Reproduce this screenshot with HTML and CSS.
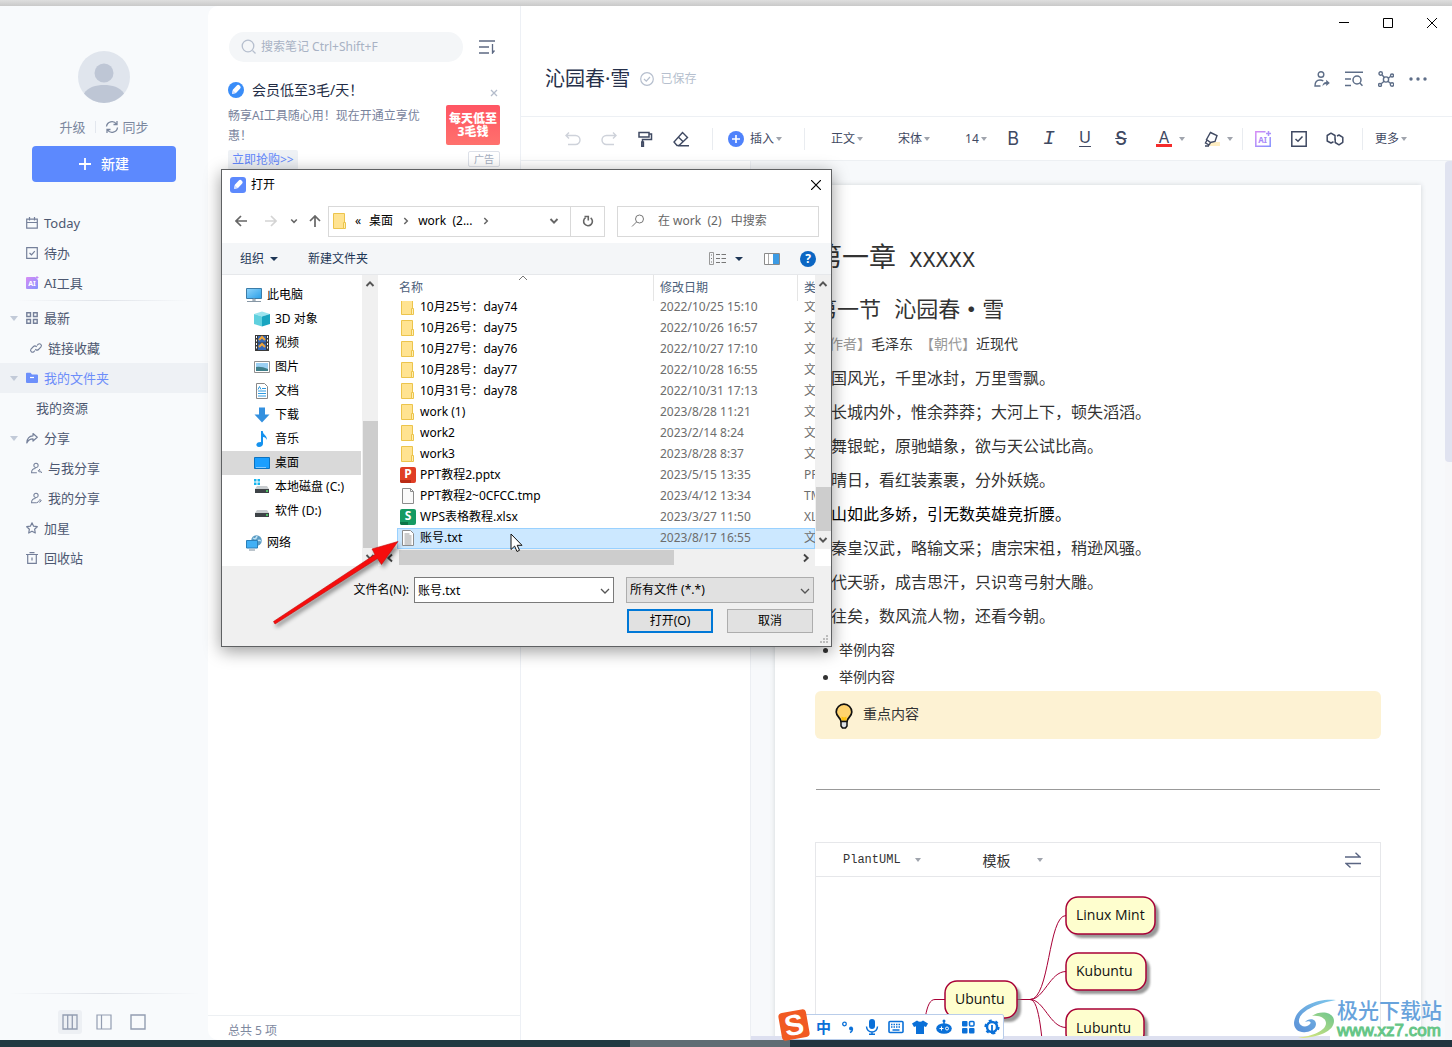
FILE: index.html
```html
<!DOCTYPE html>
<html lang="zh-CN">
<head>
<meta charset="utf-8">
<title>沁园春·雪</title>
<link rel="stylesheet" href="styles.css">
</head>
<body>
<svg class="defs" aria-hidden="true">
  <defs>
    <linearGradient id="ai-grad" x1="0" y1="0" x2="1" y2="1"><stop offset="0" stop-color="#d98cf5"/><stop offset="1" stop-color="#8292ff"/></linearGradient>
    <linearGradient id="screen" x1="0" y1="0" x2="1" y2="1"><stop offset="0" stop-color="#8fd4fb"/><stop offset="1" stop-color="#2a9fe8"/></linearGradient>
    <linearGradient id="swirl-blue" x1="0" y1="1" x2="1" y2="0"><stop offset="0" stop-color="#5a8fd6"/><stop offset="1" stop-color="#7fc8ec"/></linearGradient>
    <linearGradient id="swirl-green" x1="0" y1="1" x2="1" y2="0"><stop offset="0" stop-color="#e4ea7c"/><stop offset="1" stop-color="#6cc58f"/></linearGradient>
    <symbol id="folder" viewBox="0 0 16 16"><path d="M1.500.5h11v15h-11z" fill="#ffe391" stroke="#ecc44c"/><path d="M11.500 9.500h2v6h-2z" fill="#fff0b5" stroke="#ecc44c"/></symbol>
    <symbol id="person" viewBox="0 0 14 14"><circle cx="7" cy="4" r="2.500" fill="none" stroke="currentColor" stroke-width="1.200"/><path d="M8 12.500H1.800c0-3 2-5 4.700-5" fill="none" stroke="currentColor" stroke-width="1.200"/></symbol>
    <symbol id="chev-down" viewBox="0 0 10 10"><path d="M1 3l4 4 4-4" fill="none" stroke="currentColor" stroke-width="1.300"/></symbol>
    <symbol id="chev-up" viewBox="0 0 10 10"><path d="M1.500 7L5 3.300 8.500 7" fill="none" stroke="currentColor" stroke-width="1.900"/></symbol>
    <symbol id="chev-low" viewBox="0 0 10 10"><path d="M1.500 3L5 6.700 8.500 3" fill="none" stroke="currentColor" stroke-width="1.900"/></symbol>
    <symbol id="chev-right" viewBox="0 0 10 10"><path d="M3.300 2l3 3-3 3" fill="none" stroke="currentColor" stroke-width="1.500"/></symbol>
    <symbol id="pen" viewBox="0 0 16 16"><path d="M4 12l.8-4.200 4-4.300c1-1 2-.8 3 .2s1.200 2 .2 3L8 11z" fill="#fff"/><path d="M4 12l.8-3.500L8 11z" fill="#cfdcff"/></symbol>
    <symbol id="drive" viewBox="0 0 16 16"><path d="M3 7h10l2 3H1z" fill="#c9cdd0"/><path d="M1 10h14v4H1z" fill="#3e4347"/><path d="M12 12h2" stroke="#55e36b" stroke-width="1.400"/></symbol>
  </defs>
</svg>

<div class="desktop">
  <div class="backdrop"></div>
  <div class="app">
    <nav class="sidebar">
      <div class="avatar"><svg viewBox="0 0 52 52" width="52" height="52"><circle cx="26" cy="26" r="26" fill="#e0e5ed"/><circle cx="26" cy="22" r="9.500" fill="#bec6d5"/><path d="M6 42.500C10 36 18 34 26 34s16 2 20 8.500A26 26 0 0 1 6 42.500z" fill="#bec6d5"/></svg></div>
      <div class="account">
        <a href="#">升级</a><i class="bar"></i>
        <a href="#" class="sync"><svg viewBox="0 0 14 14" width="14" height="14"><path d="M1.500 6.500A5.500 5.500 0 0 1 11.500 4M12.500 7.500A5.500 5.500 0 0 1 2.500 10M12 1v3.500H8.500M2 13V9.500h3.500" fill="none" stroke="currentColor" stroke-width="1.300"/></svg>同步</a>
      </div>
      <button class="new"><svg viewBox="0 0 12 12" width="12" height="12"><path d="M6 0v12M0 6h12" stroke="#fff" stroke-width="1.800"/></svg>新建</button>
      <ul class="menu">
        <li><a href="#"><svg viewBox="0 0 12 12" width="12" height="12"><path d="M.7 2.200h10.600v9H.7zM.7 5.500h10.600M3.500 0v3.500M8.500 0v3.500" fill="none" stroke="currentColor" stroke-width="1.200"/></svg>Today</a></li>
        <li><a href="#"><svg viewBox="0 0 12 12" width="12" height="12"><path d="M.7.7h10.600v10.600H.7zM3.500 6l2 1.800 3.300-3.600" fill="none" stroke="currentColor" stroke-width="1.200"/></svg>待办</a></li>
        <li><a href="#"><svg viewBox="0 0 12 12" width="12" height="12"><path d="M1 0h8l3 3v8q0 1-1 1H1q-1 0-1-1V1q0-1 1-1z" fill="url(#ai-grad)"/><path d="M11 -1v3M9.500 .5h3" stroke="#c38af7"/><text x="6" y="9" font-size="7" font-weight="bold" text-anchor="middle" fill="#fff">AI</text></svg>AI工具</a></li>
      </ul>
      <hr class="fade">
      <ul class="menu tree-menu">
        <li><a href="#"><i class="tri"></i><svg viewBox="0 0 12 12" width="12" height="12"><path d="M.8.8h3.700v3.700H.8zM7.500.8h3.700v3.700H7.500zM.8 7.500h3.700v3.700H.8zM7.500 7.500h3.700v3.700H7.500z" fill="none" stroke="currentColor" stroke-width="1.400"/></svg>最新</a></li>
        <li class="sub"><a href="#"><svg viewBox="0 0 12 12" width="12" height="12"><path d="M5 8.500L3.800 9.800a2 2 0 0 1-2.800-2.800l2.500-2.500a2 2 0 0 1 2.800 0l.4.5M7 3.500L8.200 2.200A2 2 0 0 1 11 5L8.500 7.500a2 2 0 0 1-2.800 0L5.300 7" fill="none" stroke="currentColor" stroke-width="1.100"/></svg>链接收藏</a></li>
        <li class="on"><a href="#"><i class="tri"></i><svg viewBox="0 0 12 12" width="12" height="12"><path d="M0 1.500Q0 .8 1 .8h3.500L6 2.500h5q1 0 1 1V10q0 1-1 1H1q-1 0-1-1z" fill="#6d90fb"/><path d="M4 5.500h4" stroke="#fff" stroke-width="1.200"/></svg>我的文件夹</a></li>
        <li class="leaf"><a href="#">我的资源</a></li>
        <li><a href="#"><i class="tri"></i><svg viewBox="0 0 12 12" width="12" height="12"><path d="M7 1.500L11.300 5.300 7 9V6.800C4 6.800 2 8 .8 11 1 6.500 3.500 4 7 3.800z" fill="none" stroke="currentColor" stroke-width="1.200" stroke-linejoin="round"/></svg>分享</a></li>
        <li class="sub"><a href="#"><svg viewBox="0 0 12 12" width="12" height="12"><use href="#person"/><path d="M11.500 11c0-1.500-1-2.200-3-2.200M10 7L8.300 8.800 10 10.500" fill="none" stroke="currentColor"/></svg>与我分享</a></li>
        <li class="sub"><a href="#"><svg viewBox="0 0 12 12" width="12" height="12"><use href="#person"/><path d="M7.500 11c0-1.500 1-2.200 3-2.200M9.500 7l1.800 1.800-1.800 1.700" fill="none" stroke="currentColor"/></svg>我的分享</a></li>
        <li><a href="#"><svg viewBox="0 0 12 12" width="12" height="12"><path d="M6 .8l1.600 3.400 3.700.5-2.700 2.500.7 3.800L6 9.200 2.700 11l.7-3.800L.7 4.700l3.700-.5z" fill="none" stroke="currentColor" stroke-width="1.200" stroke-linejoin="round"/></svg>加星</a></li>
        <li><a href="#"><svg viewBox="0 0 12 12" width="12" height="12"><path d="M0 2.500h12M3.500.6h5M1.700 2.500v8.800h8.600V2.500M6 5.500v3" fill="none" stroke="currentColor" stroke-width="1.200"/></svg>回收站</a></li>
      </ul>
      <div class="views">
        <hr class="fade">
        <div class="view-buttons">
          <button class="on" aria-label="三栏"><svg viewBox="0 0 16 16" width="16" height="16"><path d="M1 1h14v14H1zM5.700 1v14M10.300 1v14" fill="none" stroke="currentColor" stroke-width="1.300"/></svg></button>
          <button aria-label="两栏"><svg viewBox="0 0 16 16" width="16" height="16"><path d="M1 1h14v14H1zM5.500 1v14" fill="none" stroke="currentColor" stroke-width="1.200"/></svg></button>
          <button aria-label="单栏"><svg viewBox="0 0 16 16" width="16" height="16"><path d="M1 1h14v14H1z" fill="none" stroke="currentColor" stroke-width="1.400"/></svg></button>
        </div>
      </div>
    </nav>

    <section class="notes">
      <div class="search-row">
        <label class="search"><svg viewBox="0 0 16 16" width="16" height="16"><circle cx="7" cy="7" r="5.800" fill="none" stroke="#b6bfce" stroke-width="1.300"/><path d="M11.500 11.500l3 3" stroke="#b6bfce" stroke-width="1.300"/></svg><input type="text" aria-label="搜索笔记" placeholder="搜索笔记 Ctrl+Shift+F"></label>
        <button class="plain sort" aria-label="排序"><svg viewBox="0 0 16 14" width="16" height="14"><path d="M0 1h16M0 7h10M0 13h10M13.500 4v9l2-2.500" fill="none" stroke="#5d6983" stroke-width="1.300"/></svg></button>
      </div>
      <article class="ad">
        <header><svg viewBox="0 0 16 16" width="16" height="16"><circle cx="8" cy="8" r="8" fill="#3a8df8"/><use href="#pen"/></svg><h2>会员低至3毛/天！</h2><button class="plain" aria-label="关闭"><svg viewBox="0 0 8 8" width="8" height="8"><path d="M1 1l6 6M7 1L1 7" stroke="#b4bccb" stroke-width="1.300"/></svg></button></header>
        <div class="ad-body">
          <div class="ad-text"><p>畅享AI工具随心用！现在开通立享优惠！</p><a href="#">立即抢购&gt;&gt;</a></div>
          <div class="ad-side"><strong>每天低至<br>3毛钱</strong><small>广告</small></div>
        </div>
      </article>
      <footer>总共 5 项</footer>
    </section>

    <main class="editor">
      <header class="head">
        <div class="win">
          <button class="plain" aria-label="最小化"><svg viewBox="0 0 10 10" width="10" height="10"><path d="M0 4.500h10" stroke="#000"/></svg></button>
          <button class="plain" aria-label="最大化"><svg viewBox="0 0 10 10" width="10" height="10"><path d="M.5.5h9v9h-9z" fill="none" stroke="#000"/></svg></button>
          <button class="plain" aria-label="关闭窗口"><svg viewBox="0 0 10 10" width="10" height="10"><path d="M0 0l10 10M10 0L0 10" stroke="#000"/></svg></button>
        </div>
        <div class="title-row">
          <h1>沁园春·雪</h1>
          <span class="saved"><svg viewBox="0 0 14 14" width="14" height="14"><circle cx="7" cy="7" r="6.300" fill="none" stroke="currentColor" stroke-width="1.200"/><path d="M4 7l2.300 2.200L10 5" fill="none" stroke="currentColor" stroke-width="1.200"/></svg>已保存</span>
          <div class="actions">
            <button class="plain" aria-label="分享"><svg viewBox="0 0 16 16" width="16" height="16"><circle cx="7" cy="3.500" r="2.800" fill="none" stroke="currentColor" stroke-width="1.400"/><path d="M6.500 15H1c0-4 2-6 5-6 1.500 0 2.500.4 3.300 1" fill="none" stroke="currentColor" stroke-width="1.400"/><path d="M8.500 15.500c0-3 1.500-4.500 3.700-4.500V8.800l3.600 3.200-3.600 3v-2c-1.500 0-2.700.7-3.700 2.500z" fill="currentColor"/></svg></button>
            <button class="plain" aria-label="查找"><svg viewBox="0 0 18 16" width="18" height="16"><path d="M0 1.200h18M0 8h6M0 14.500h6" stroke="currentColor" stroke-width="1.500"/><circle cx="12" cy="9" r="4" fill="none" stroke="currentColor" stroke-width="1.500"/><path d="M14.800 12l2.700 2.800" stroke="currentColor" stroke-width="1.500"/></svg></button>
            <button class="plain" aria-label="关系图"><svg viewBox="0 0 16 16" width="16" height="16"><g fill="none" stroke="currentColor" stroke-width="1.400"><circle cx="8" cy="8.500" r="2.600"/><circle cx="2.700" cy="2.500" r="1.700"/><circle cx="14" cy="4.500" r="1.500"/><circle cx="2" cy="14" r="1.500"/><circle cx="14" cy="13.500" r="1.700"/><path d="M4 3.800L6.300 6.500M12.700 5.200l-2.400 2M3.200 12.800l2.900-2.500M12.600 12.600l-2.600-2.300"/></g></svg></button>
            <button class="plain" aria-label="更多操作"><svg viewBox="0 0 18 4" width="18" height="4"><g fill="currentColor"><circle cx="2" cy="2" r="1.700"/><circle cx="9" cy="2" r="1.700"/><circle cx="16" cy="2" r="1.700"/></g></svg></button>
          </div>
        </div>
      </header>

      <div class="toolbar">
        <div class="tools">
          <button class="tool off" aria-label="撤销"><svg viewBox="0 0 16 14" width="16" height="14"><path d="M1 3.500h9.500a4.500 4.500 0 0 1 0 9H3M4 .5l-3 3 3 3" fill="none" stroke="currentColor" stroke-width="1.400"/></svg></button>
          <button class="tool off" aria-label="重做"><svg viewBox="0 0 16 14" width="16" height="14"><path d="M15 3.500H5.500a4.500 4.500 0 0 0 0 9H13M12 .5l3 3-3 3" fill="none" stroke="currentColor" stroke-width="1.400"/></svg></button>
          <button class="tool" aria-label="格式刷"><svg viewBox="0 0 16 16" width="16" height="16"><path d="M2 1.500h10v4.500H2zM12 3h2.500v5.500h-9V11M4.800 11h1.600v4.500H4.800z" fill="none" stroke="currentColor" stroke-width="1.500"/></svg></button>
          <button class="tool" aria-label="清除格式"><svg viewBox="0 0 16 16" width="16" height="16"><path d="M9.500 1.500l5 5-8.500 8H4L1 11zM5.300 6l5.200 5M5 14.700h11" fill="none" stroke="currentColor" stroke-width="1.400"/></svg></button>
        </div>
        <i class="sep"></i>
        <button class="pick insert"><svg viewBox="0 0 16 16" width="16" height="16"><circle cx="8" cy="8" r="8" fill="#4f82fb"/><path d="M8 4v8M4 8h8" stroke="#fff" stroke-width="1.600"/></svg>插入<i class="caret"></i></button>
        <i class="sep"></i>
        <div class="picks">
          <button class="pick">正文<i class="caret"></i></button>
          <button class="pick">宋体<i class="caret"></i></button>
          <button class="pick size">14<i class="caret"></i></button>
        </div>
        <div class="tools">
          <button class="tool glyph">B</button>
          <button class="tool glyph it">I</button>
          <button class="tool glyph un">U</button>
          <button class="tool glyph st">S</button>
        </div>
        <div class="swatches">
          <button class="pick swatch"><span class="colour">A</span><i class="caret"></i></button>
          <button class="pick swatch" aria-label="高亮"><svg viewBox="0 0 16 16" width="16" height="16"><path d="M5 11h11v4H5z" fill="#ffeec2"/><path d="M6.500 1.500l6.500 3-2 6-4.500 1-4-3zM3 9l-1.500 3 3.500 1.800 1.500-2M1 15h4" fill="none" stroke="currentColor" stroke-width="1.400"/></svg><i class="caret"></i></button>
        </div>
        <i class="sep tight"></i>
        <div class="tools">
          <button class="tool" aria-label="AI"><svg viewBox="0 0 16 16" width="16" height="16"><path d="M10.500.8H.8v14.400h14.400V6M13.500 0v5M11 2.500h5" fill="none" stroke="url(#ai-grad)" stroke-width="1.500"/><text x="7.500" y="11.500" font-size="8" font-weight="bold" text-anchor="middle" fill="#a98af8">AI</text></svg></button>
          <button class="tool" aria-label="待办"><svg viewBox="0 0 16 16" width="16" height="16"><path d="M.8.8h14.400v14.400H.8zM4.500 8l2.500 2.300L11.500 5.500" fill="none" stroke="currentColor" stroke-width="1.500"/></svg></button>
          <button class="tool" aria-label="链接"><svg viewBox="0 0 18 14" width="18" height="14"><path d="M7.500 9.800L5 11 1.200 9V3.500L5 1.200l4 2.300V8M11 4l2-1 3.800 2.300v5L13 12.800 9.200 10.500V6.500" fill="none" stroke="currentColor" stroke-width="1.500" stroke-linejoin="round"/></svg></button>
        </div>
        <i class="sep tight"></i>
        <button class="pick more">更多<i class="caret"></i></button>
      </div>

      <div class="work">
        <aside class="outline"></aside>
        <div class="canvas">
          <article class="paper">
            <h2>第一章<span class="half"> XXXXX</span></h2>
            <h3>第一节<span class="half"> </span>沁园春<span class="dot">·</span>雪</h3>
            <p class="by"><span>【作者】</span>毛泽东　<span>【朝代】</span>近现代</p>
            <div class="poem">
              <p>北国风光，千里冰封，万里雪飘。</p>
              <p>望长城内外，惟余莽莽；大河上下，顿失滔滔。</p>
              <p>山舞银蛇，原驰蜡象，欲与天公试比高。</p>
              <p>须晴日，看红装素裹，分外妖娆。</p>
              <p class="strong">江山如此多娇，引无数英雄竞折腰。</p>
              <p>惜秦皇汉武，略输文采；唐宗宋祖，稍逊风骚。</p>
              <p>一代天骄，成吉思汗，只识弯弓射大雕。</p>
              <p>俱往矣，数风流人物，还看今朝。</p>
            </div>
            <ul class="points"><li>举例内容</li><li>举例内容</li></ul>
            <div class="callout"><svg viewBox="0 0 18 26" width="18" height="26"><path d="M6 18.500C6 15 1.200 13.500 1.200 9a7.800 7.800 0 0 1 15.600 0c0 4.500-4.800 6-4.800 9.500z" fill="#ffd36e" stroke="#111" stroke-width="1.700"/><path d="M6.500 13.500l2.500 1 2.500-1v4h-5z" fill="#ffc20e"/><path d="M6 18.500h6v4.500l-1.500 2h-3L6 23z" fill="#dfe3e8" stroke="#111" stroke-width="1.500"/></svg><span>重点内容</span></div>
            <hr>
            <div class="uml">
              <div class="uml-bar"><button class="plain">PlantUML<i class="caret"></i></button><button class="plain tpl">模板<i class="caret"></i></button><button class="plain swap" aria-label="切换"><svg viewBox="0 0 16 16" width="16" height="16"><path d="M0 5h15L10.500.8M16 11.500H1l4.500 4" fill="none" stroke="#5b6683" stroke-width="1.400"/></svg></button></div>
              <svg class="diagram" width="564" height="220" viewBox="0 0 564 220">
                <g fill="none" stroke="#a80036"><path d="M201 122.500h13c20 0 18-84 36-84M214 122.500c14 0 20-28 36-28M214 122.500c14 0 20 28 36 28M214 122.500c10 0 12 40 16 84M129 122.500h-10c-10 0-10 24-16 60"/></g>
                <g class="shadow"><rect x="254" y="24" width="89" height="37" rx="12"/><rect x="254" y="80" width="80" height="37" rx="12"/><rect x="254" y="136" width="78" height="37" rx="12"/><rect x="133" y="108" width="72" height="37" rx="12"/></g>
                <g fill="#fefece" stroke="#a80036" stroke-width="1.500"><rect x="250" y="20" width="89" height="37" rx="12"/><rect x="250" y="76" width="80" height="37" rx="12"/><rect x="250" y="132" width="78" height="37" rx="12"/><rect x="129" y="104" width="72" height="37" rx="12"/></g>
                <g class="labels"><text x="260" y="43">Linux Mint</text><text x="260" y="99">Kubuntu</text><text x="260" y="156">Lubuntu</text><text x="139" y="127">Ubuntu</text></g>
              </svg>
            </div>
          </article>
          <i class="track"><i></i></i>
          <i class="hbar"></i>
        </div>
      </div>
    </main>
  </div>
  <div class="taskbar"></div>
</div>

<section class="dialog" role="dialog" aria-label="打开">
  <header class="dlg-title"><svg viewBox="0 0 16 16" width="16" height="16"><rect width="16" height="16" rx="3" fill="#5c89fd"/><use href="#pen"/></svg><span>打开</span><button class="plain" aria-label="关闭"><svg viewBox="0 0 10 10" width="10" height="10"><path d="M0 0l10 10M10 0L0 10" stroke="#000" stroke-width="1.200"/></svg></button></header>
  <div class="dlg-nav">
    <button class="plain back" aria-label="后退"><svg viewBox="0 0 12 12" width="12" height="12"><path d="M12 6H1.500M6 1L1 6l5 5" fill="none" stroke="#666" stroke-width="1.700"/></svg></button>
    <button class="plain fwd" aria-label="前进"><svg viewBox="0 0 12 12" width="12" height="12"><path d="M0 6h10.500M6 1l5 5-5 5" fill="none" stroke="#d4d4d4" stroke-width="1.700"/></svg></button>
    <button class="plain" aria-label="最近"><svg width="8" height="8"><use href="#chev-low"/></svg></button>
    <button class="plain up" aria-label="上移"><svg viewBox="0 0 12 12" width="12" height="12"><path d="M6 12V1.500M1 6l5-5 5 5" fill="none" stroke="#666" stroke-width="1.700"/></svg></button>
    <div class="address">
      <svg width="16" height="16"><use href="#folder"/></svg><span class="lead">«</span><span>桌面</span><svg width="10" height="10"><use href="#chev-right"/></svg><span>work&nbsp; (2...</span><svg width="10" height="10"><use href="#chev-right"/></svg>
      <button class="plain drop" aria-label="历史"><svg width="10" height="10"><use href="#chev-low"/></svg></button>
      <button class="plain refresh" aria-label="刷新"><svg viewBox="0 0 12 12" width="12" height="12"><path d="M8.700 2.800A4.400 4.400 0 1 1 3.600 2.600M2.500 1.500h3.800v4" fill="none" stroke="#666" stroke-width="1.600"/></svg></button>
    </div>
    <label class="find"><svg viewBox="0 0 14 14" width="14" height="14"><circle cx="8.500" cy="5" r="4" fill="none" stroke="#777"/><path d="M5.500 8L1 12.500" stroke="#777"/></svg><input type="text" aria-label="搜索" placeholder="在 work&nbsp; (2)&nbsp;&nbsp; 中搜索"></label>
  </div>
  <div class="dlg-tools">
    <button class="plain">组织<i class="caret dark"></i></button><button class="plain">新建文件夹</button>
    <div class="dlg-right">
      <button class="plain" aria-label="视图"><svg viewBox="0 0 17 13" width="17" height="13"><path d="M.5.5h4v12h-4z" fill="none" stroke="#999"/><path d="M2 3h1M2 6.500h1M2 10h1M7 2.500h4M12.500 2.500H17M7 6.500h4M12.500 6.500H17M7 10.500h4M12.500 10.500H17" stroke="#777"/></svg><i class="caret dark"></i></button>
      <button class="plain" aria-label="预览窗格"><svg viewBox="0 0 16 12" width="16" height="12"><path d="M.5.5h15v11H.5z" fill="#fff" stroke="#8a8a8a"/><path d="M9 1h6v10H9z" fill="#3c9be4"/><path d="M4.500 1v10" stroke="#aaa"/></svg></button>
      <button class="plain help" aria-label="帮助">?</button>
    </div>
  </div>
  <div class="dlg-body">
    <ul class="places">
      <li class="root"><svg viewBox="0 0 16 16" width="16" height="16"><path d="M.5 1.500h15v10H.5z" fill="url(#screen)" stroke="#3b7ca8"/><path d="M7 12h2v2H7zM1 14.500h14" stroke="#8797a5" fill="none"/></svg>此电脑</li>
      <li><svg viewBox="0 0 16 16" width="16" height="16"><path d="M0 3l8-2.500L16 3l-8 2.500z" fill="#9be4ee"/><path d="M0 3l8 2.500v10L0 13z" fill="#5fd0de"/><path d="M16 3L8 5.500v10l8-2.500z" fill="#18a5c0"/></svg>3D 对象</li>
      <li><svg viewBox="0 0 16 16" width="16" height="16"><path d="M1 0h14v16H1z" fill="#3a3a3a"/><path d="M4 1h8v6.500H4zM4 8.500h8V15H4z" fill="#3468b8"/><path d="M5 5l3-3 3 3M5 12l3-3 3 3" stroke="#f0a53a" stroke-width="2" fill="none"/><path d="M2.500 1v14M13.500 1v14" stroke="#fff" stroke-dasharray="2 1.500"/></svg>视频</li>
      <li><svg viewBox="0 0 16 16" width="16" height="16"><path d="M.5 2.500h15v11H.5z" fill="#fff" stroke="#8f8f8f"/><path d="M2 4h12v8H2z" fill="#9bd0f3"/><path d="M2 8q5-1 12 2v2H2z" fill="#3f7f8a"/></svg>图片</li>
      <li><svg viewBox="0 0 16 16" width="16" height="16"><path d="M2.500.5h8l3 3v12h-11z" fill="#fff" stroke="#888"/><path d="M4 8h8M4 10.500h8M4 13h8M8 5.500h4" stroke="#2f9ae0"/><path d="M4 6.500l1.500-3L7 6.500" stroke="#2f9ae0" fill="none"/></svg>文档</li>
      <li><svg viewBox="0 0 16 16" width="16" height="16"><path d="M5 .5h6v7h4.500L8 15.500.5 7.500H5z" fill="#3390df"/></svg>下载</li>
      <li><svg viewBox="0 0 16 16" width="16" height="16"><path d="M7 0h1.800c0 4 4.500 4 4 9-.7-2-2-2.800-3.800-3v6.500c0 2-1.500 3.500-4 3.500-3.500 0-3.500-4.500 0-4.800L7 11z" fill="#1592ee"/></svg>音乐</li>
      <li class="on"><svg viewBox="0 0 16 16" width="16" height="16"><path d="M.5 2.500h15v11H.5z" fill="#1a9fff" stroke="#0c72bf"/><path d="M2 12.500h10" stroke="#9fd6ff" stroke-width=".8"/></svg>桌面</li>
      <li><svg viewBox="0 0 16 16" width="16" height="16"><use href="#drive"/><path d="M0 0h2.500v2.500H0zM3.500 0H6v2.500H3.500zM0 3.500h2.500V6H0zM3.500 3.500H6V6H3.500z" fill="#16b5ee"/></svg>本地磁盘 (C:)</li>
      <li><svg width="16" height="16"><use href="#drive"/></svg>软件 (D:)</li>
      <li class="root net"><svg viewBox="0 0 16 16" width="16" height="16"><circle cx="10.500" cy="5.500" r="5.300" fill="#5b9cc4"/><path d="M7 3q3 2 4-2M9 8q3-4 6-2" stroke="#bfe2f5" stroke-width="1.500" fill="none"/><path d="M.5 5.500h11v7.500H.5z" fill="#41b0f5" stroke="#2a7fb8"/><path d="M3 15h6" stroke="#7a8c99"/></svg>网络</li>
    </ul>
    <div class="vscroll tree-scroll"><svg width="10" height="10"><use href="#chev-up"/></svg><i></i><svg width="10" height="10"><use href="#chev-low"/></svg></div>
    <div class="files">
      <div class="files-main">
        <div class="files-view">
          <table>
            <colgroup><col class="c-name"><col class="c-date"><col></colgroup>
            <thead><tr><th><div>名称<svg class="sorted" width="10" height="10"><path d="M1 7l4-4 4 4" fill="none" stroke="#777"/></svg></div></th><th><div>修改日期</div></th><th><div>类型</div></th></tr></thead>
            <tbody>
              <tr><td><svg width="16" height="16"><use href="#folder"/></svg>10月25号：day74</td><td>2022/10/25 15:10</td><td>文件夹</td></tr>
              <tr><td><svg width="16" height="16"><use href="#folder"/></svg>10月26号：day75</td><td>2022/10/26 16:57</td><td>文件夹</td></tr>
              <tr><td><svg width="16" height="16"><use href="#folder"/></svg>10月27号：day76</td><td>2022/10/27 17:10</td><td>文件夹</td></tr>
              <tr><td><svg width="16" height="16"><use href="#folder"/></svg>10月28号：day77</td><td>2022/10/28 16:55</td><td>文件夹</td></tr>
              <tr><td><svg width="16" height="16"><use href="#folder"/></svg>10月31号：day78</td><td>2022/10/31 17:13</td><td>文件夹</td></tr>
              <tr><td><svg width="16" height="16"><use href="#folder"/></svg>work (1)</td><td>2023/8/28 11:21</td><td>文件夹</td></tr>
              <tr><td><svg width="16" height="16"><use href="#folder"/></svg>work2</td><td>2023/2/14 8:24</td><td>文件夹</td></tr>
              <tr><td><svg width="16" height="16"><use href="#folder"/></svg>work3</td><td>2023/8/28 8:37</td><td>文件夹</td></tr>
              <tr><td><svg viewBox="0 0 16 16" width="16" height="16"><rect width="16" height="16" rx="2" fill="#e03e25"/><path d="M0 13h11v3H2q-2 0-2-2z" fill="#b92a14"/><text x="8" y="11" font-size="12" font-weight="bold" text-anchor="middle" fill="#fff">P</text></svg>PPT教程2.pptx</td><td>2023/5/15 13:35</td><td>PPTX</td></tr>
              <tr><td><svg viewBox="0 0 16 16" width="16" height="16"><path d="M2.500.5h8l3 3v12h-11z" fill="#fafafa" stroke="#8c8c8c"/><path d="M10.500.5v3h3" fill="none" stroke="#8c8c8c"/></svg>PPT教程2~0CFCC.tmp</td><td>2023/4/12 13:34</td><td>TMP</td></tr>
              <tr><td><svg viewBox="0 0 16 16" width="16" height="16"><rect width="16" height="16" rx="2" fill="#159a62"/><path d="M0 13h8v3H2q-2 0-2-2z" fill="#0a7447"/><text x="8" y="11" font-size="12" font-weight="bold" text-anchor="middle" fill="#fff">S</text></svg>WPS表格教程.xlsx</td><td>2023/3/27 11:50</td><td>XLSX</td></tr>
              <tr class="on"><td><svg viewBox="0 0 16 16" width="16" height="16"><path d="M2.500.5h8l3 3v12h-11z" fill="#fff" stroke="#8c8c8c"/><path d="M4.500 4h5M4.500 6h7M4.500 8h7M4.500 10h7M4.500 12h7M4.500 14h7" stroke="#999"/></svg>账号.txt</td><td>2023/8/17 16:55</td><td>文本</td></tr>
            </tbody>
          </table>
        </div>
        <div class="vscroll list-scroll"><svg width="10" height="10"><use href="#chev-up"/></svg><i></i><svg width="10" height="10"><use href="#chev-low"/></svg></div>
      </div>
      <div class="hscroll"><svg viewBox="0 0 10 10" width="10" height="10"><path d="M7 1.500L3.300 5 7 8.500" fill="none" stroke="currentColor" stroke-width="1.900"/></svg><i></i><svg viewBox="0 0 10 10" width="10" height="10"><path d="M3 1.500L6.700 5 3 8.500" fill="none" stroke="currentColor" stroke-width="1.900"/></svg></div>
    </div>
  </div>
  <footer class="dlg-foot">
    <div class="foot-row"><label for="fname">文件名(N):</label><span class="combo"><input id="fname" type="text" value="账号.txt"><svg width="10" height="10"><use href="#chev-down"/></svg></span><span class="combo grey"><select aria-label="文件类型"><option>所有文件 (*.*)</option></select><svg width="10" height="10"><use href="#chev-down"/></svg></span></div>
    <div class="foot-row"><button class="btn primary">打开(O)</button><button class="btn">取消</button></div>
    <svg class="grip" viewBox="0 0 9 9" width="9" height="9"><path d="M6 1h2M3 4h2M6 4h2M0 7h2M3 7h2M6 7h2" stroke="#bcbcbc" stroke-width="2"/></svg>
  </footer>
</section>

<svg class="pointer-arrow" viewBox="0 0 136 96" width="136" height="96"><path d="M4.500 85.500L106 18.500 103 13 129 5.500 112.500 28.500 108.500 22.500 6 88z" fill="#f60d0d" stroke="#c40a0a" stroke-width=".6"/></svg>
<svg class="cursor" viewBox="0 0 13 20" width="13" height="20"><path d="M1 1v15.500l3.600-3.400L7 18.500l2.500-1.200-2.300-5h4.800z" fill="#fff" stroke="#111"/></svg>

<div class="ime">
  <svg class="sogou" viewBox="0 0 32 32" width="32" height="32"><g transform="rotate(-10 16 16)"><rect x="2" y="2" width="28" height="28" rx="4" fill="#f15a22"/><text x="16" y="26" font-size="29" font-weight="bold" text-anchor="middle" fill="#fff">S</text></g></svg>
  <b>中</b>
  <svg viewBox="0 0 16 16" width="16" height="16"><circle cx="4.500" cy="5" r="1.800" fill="none" stroke="currentColor" stroke-width="1.300"/><circle cx="11" cy="9.500" r="2" fill="currentColor"/><path d="M12.500 9.500q0 3-2.500 4" stroke="currentColor" stroke-width="1.400" fill="none"/></svg>
  <svg viewBox="0 0 16 16" width="16" height="16"><rect x="5" y="0" width="6" height="10" rx="3" fill="currentColor"/><path d="M2.500 7.500a5.500 5.500 0 0 0 11 0M8 13v2.500M5 15.300h6" fill="none" stroke="currentColor" stroke-width="1.400"/></svg>
  <svg viewBox="0 0 16 16" width="16" height="16"><rect x="1" y="2.500" width="14" height="11" rx="1" fill="none" stroke="currentColor" stroke-width="1.600"/><path d="M3 5.500h10M3 8h10" stroke="currentColor" stroke-width="1.500" stroke-dasharray="1.500 1"/><path d="M4.500 11h7" stroke="currentColor" stroke-width="1.500"/></svg>
  <svg viewBox="0 0 16 16" width="16" height="16"><path d="M5 1.500q3 2.500 6 0l5 3-2 3.500-2-.7V15H4V7.300L2 8 0 4.500z" fill="currentColor"/></svg>
  <svg viewBox="0 0 16 16" width="16" height="16"><ellipse cx="8" cy="9.500" rx="7.800" ry="5.300" fill="currentColor"/><path d="M8 5V2" stroke="currentColor" stroke-width="1.500"/><circle cx="8" cy="2" r="1.500" fill="currentColor"/><path d="M3.500 9.500h4M5.500 7.500v4" stroke="#fff"/><circle cx="11" cy="9.500" r="1.500" fill="none" stroke="#fff"/></svg>
  <svg viewBox="0 0 16 16" width="16" height="16"><rect x="2" y="2" width="5.500" height="5.500" rx="1" fill="currentColor"/><rect x="9.500" y="2.500" width="4.500" height="4.500" rx="1" fill="none" stroke="currentColor" stroke-width="1.500"/><rect x="2" y="9" width="5.500" height="5.500" rx="1" fill="currentColor"/><rect x="9" y="9" width="5.500" height="5.500" rx="1" fill="currentColor"/></svg>
  <svg viewBox="0 0 16 16" width="16" height="16"><circle cx="8" cy="8" r="5" fill="none" stroke="currentColor" stroke-width="2.500"/><circle cx="8" cy="8" r="6.600" fill="none" stroke="currentColor" stroke-width="2" stroke-dasharray="3 3.900"/><path d="M8 6v9" stroke="currentColor" stroke-width="1.800"/></svg>
</div>

<div class="watermark">
  <svg viewBox="0 0 44 42" width="44" height="42"><path d="M43 2C22 0 2 10 1 25c0 7 6 10 12 9 8-1 12-7 9-11-2-3-8-2-10 1 4-2 7 0 5 2-3 4-10 3-11-2C5 15 20 6 43 2z" fill="url(#swirl-blue)"/><path d="M19 18c8-6 22-4 22 5 0 10-15 17-36 17 14-2 28-7 28-15 0-5-7-8-14-7z" fill="url(#swirl-green)"/></svg>
  <div><strong>极光下载站</strong><span>www.xz7.com</span></div>
</div>
</body>
</html>
```
FILE: styles.css
```css
* { box-sizing: border-box; }
body { margin: 0; height: 100vh; overflow: hidden; font: 13px/20px "Noto Sans", "Noto Sans CJK SC", sans-serif; color: #4d5871; background: #fff; position: relative; }
h1, h2, h3, p, ul { margin: 0; padding: 0; font-weight: 400; }
ul { list-style: none; }
a { color: inherit; text-decoration: none; }
button, input, select { font: inherit; color: inherit; margin: 0; padding: 0; border: 0; background: none; }
svg { display: block; flex: none; }
.defs { position: absolute; width: 0; height: 0; }
.plain { display: flex; align-items: center; justify-content: center; }

.desktop { height: 100%; display: grid; grid-template-rows: 6px minmax(0, 1fr) 7px; }
.backdrop { background: linear-gradient(#dedede, #c9c9c9); }
.taskbar { background: linear-gradient(90deg, #213a42 630px, #5f6d74 630px, #5f6d74 790px, #22343f 790px); }
.app { display: grid; grid-template-columns: 208px 313px minmax(0, 1fr); min-height: 0; background: #f8fafc; }

/* Sidebar */
.sidebar { display: flex; flex-direction: column; padding-top: 45px; background: #f8fafc; min-height: 0; }
.avatar { align-self: center; }
.account { display: flex; justify-content: center; align-items: center; margin-top: 14px; color: #7b879e; }
.account .bar { width: 1px; height: 12px; margin: 0 9px; background: #e3e7ee; }
.sync { display: flex; align-items: center; gap: 4px; }
.new { display: flex; align-items: center; justify-content: center; gap: 10px; height: 36px; margin: 9px 32px 26px; border-radius: 4px; background: #5c89fe; color: #fff; font-size: 14px; font-weight: 500; }
.menu a { display: flex; align-items: center; gap: 6px; height: 30px; padding-left: 26px; position: relative; }
.menu svg { color: #75809a; overflow: visible; }
.menu .sub a { padding-left: 30px; }
.menu .leaf a { padding-left: 36px; }
.menu .on { background: #eef1f5; color: #6c8dfa; }
.tri { position: absolute; left: 10px; top: 13px; border: 4px solid transparent; border-top: 5px solid #c2cad8; border-bottom: 0; }
.fade { height: 1px; border: 0; margin: 2px 16px; background: linear-gradient(90deg, transparent, #e0e3e9, transparent); }
.views { margin-top: auto; padding-bottom: 6px; }
.views .fade { margin: 0 8px 16px; }
.view-buttons { display: flex; gap: 10px; padding-left: 58px; }
.view-buttons button { width: 24px; height: 24px; padding: 4px; border-radius: 3px; color: #939db1; }
.view-buttons .on { background: #edf0f4; }

/* Note list */
.notes { display: flex; flex-direction: column; padding-top: 26px; background: #fff; border-radius: 10px 0 0 10px; border-right: 1px solid #edf0f5; min-height: 0; }
.search-row { display: flex; align-items: center; gap: 16px; padding: 0 25px 0 21px; }
.search { flex: 1; display: flex; align-items: center; gap: 4px; height: 30px; padding: 0 12px; border-radius: 15px; background: #f4f6f8; }
.search input { flex: 1; min-width: 0; font-size: 12px; outline: 0; }
.search input::placeholder { color: #a8b2c4; opacity: 1; }
.ad { padding: 18px 20px 0; }
.ad header { display: flex; align-items: center; gap: 8px; }
.ad h2 { flex: 1; font-size: 14px; line-height: 20px; color: #222c45; }
.ad header button { width: 12px; height: 12px; margin-top: 6px; }
.ad-body { display: flex; justify-content: space-between; padding-top: 5px; }
.ad-text { width: 200px; padding-top: 1px; font-size: 12px; color: #78839c; }
.ad-text a { display: inline-block; margin-top: 4px; padding: 0 4px; background: #eef1f5; border-radius: 2px; color: #6488fa; }
.ad-side { display: flex; flex-direction: column; align-items: flex-end; gap: 6px; }
.ad-side strong { width: 54px; height: 40px; padding-top: 7px; border-radius: 2px; background: linear-gradient(#ff5563, #ff716d); color: #fff; font-size: 12px; line-height: 13px; font-weight: 800; text-align: center; }
.ad-side small { width: 32px; border: 1px solid #dde1e9; border-radius: 2px; color: #a4aec0; font-size: 10px; line-height: 14px; text-align: center; }
.notes footer { margin-top: auto; height: 25px; padding: 6px 20px 0; border-top: 1px solid #edf0f3; font-size: 12px; line-height: 18px; color: #7e899f; }

/* Editor */
.editor { display: flex; flex-direction: column; min-width: 0; min-height: 0; background: #fff; }
.head { border-bottom: 1px solid #edf0f4; padding-bottom: 17px; }
.win { display: flex; justify-content: flex-end; gap: 14px; padding: 2px 5px 0 0; }
.win button { width: 30px; height: 30px; }
.title-row { display: flex; align-items: center; margin-top: 21px; padding: 0 18px 0 24px; height: 40px; }
.title-row h1 { font-size: 20px; line-height: 28px; color: #26304a; }
.saved { display: flex; align-items: center; gap: 6px; margin-left: 10px; font-size: 12px; color: #b6bfce; }
.actions { display: flex; margin-left: auto; color: #5e6e88; }
.actions button { width: 32px; height: 32px; }
.toolbar { display: flex; align-items: center; height: 44px; padding-left: 34px; border-bottom: 1px solid #edf0f3; color: #3f4962; font-size: 12px; flex: none; }
.tools, .picks, .swatches { display: flex; }
.tool { width: 36px; height: 32px; display: flex; align-items: center; justify-content: center; }
.off { color: #ced2da; }
.sep { width: 1px; height: 22px; margin: 0 15px 0 13px; background: #e9ecf0; }
.insert + .sep { margin: 0 26px 0 22px; }
.sep.tight { margin: 0 2px 0 9px; }
.pick { display: flex; align-items: center; gap: 2px; }
.picks .pick { width: 67px; }
.picks .size { width: 30px; }
.insert svg { margin-right: 4px; }
.caret { border: 3px solid transparent; border-top: 4px solid #a0a4ad; border-bottom: 0; }
.caret.dark { border-width: 4px 4px 0; border-top-color: #1e3656; }
.glyph { font: 18px/20px Inter, sans-serif; }
.it { font: italic 20px/20px "Liberation Mono", monospace; }
.un { font-size: 16px; line-height: 16px; padding-bottom: 3px; text-decoration: underline; text-underline-offset: 3px; }
.st { text-decoration: line-through; font-weight: 500; }
.swatches { gap: 19px; padding-left: 17px; }
.swatch { gap: 7px; }
.colour { width: 16px; border-bottom: 3px solid #f52b2b; font: 16px/14px Inter, sans-serif; text-align: center; }
.more { margin-left: 10px; }
.work { flex: 1; min-height: 0; display: grid; grid-template-columns: 230px minmax(0, 1fr); }
.outline { border-right: 1px solid #eceff3; }
.canvas { position: relative; overflow: hidden; background: #f7f9fb; padding: 24px 31px 0 24px; }
.track { position: absolute; top: 0; right: 0; bottom: 0; width: 7px; background: #f6f7f9; }
.track i { display: block; height: 301px; border-radius: 4px 0 0 4px; background: #e0e3f0; }
.hbar { position: absolute; left: 0; bottom: 0; width: 579px; height: 4px; background: #dde0f0; }

/* Document */
.paper { padding: 48px 40px 0; background: #fff; box-shadow: 0 0 5px rgba(60, 70, 80, .2); color: #333; font-family: "Noto Sans CJK SC", sans-serif; }
.paper h2 { height: 48px; font-size: 27px; line-height: 46px; }
.half { font-family: "Liberation Mono", monospace; font-size: 22px; line-height: 20px; white-space: pre; }
.paper h3 { height: 40px; margin-top: 6px; font-size: 22px; line-height: 40px; }
.dot { display: inline-block; width: 1em; line-height: 20px; text-align: center; font-weight: 700; }
.by { font-size: 14px; line-height: 33px; }
.by span { color: #999; }
.poem { font-size: 16px; line-height: 34px; }
.poem .strong { color: #000; }
.points { margin: 4px 0 1px; padding-left: 24px; font-size: 14px; line-height: 27px; list-style: disc; }
.points li::marker { font-size: 12px; }
.callout { display: flex; gap: 10px; height: 48px; padding: 12px 20px; border-radius: 6px; background: #fdf2d3; font-size: 14px; }
.paper hr { height: 1px; margin: 50px 1px 52px; border: 0; background: #999; }
.uml { border: 1px solid #e6e7ea; }
.uml-bar { display: flex; align-items: center; height: 34px; padding: 0 19px 0 27px; border-bottom: 1px solid #e6e7ea; font-size: 14px; }
.uml-bar button { gap: 14px; }
.uml-bar button:first-child { font-family: "Liberation Mono", monospace; font-size: 12px; }
.uml-bar .tpl { margin-left: 62px; gap: 26px; }
.uml-bar .swap { margin-left: auto; }
.diagram .shadow { fill: #777; opacity: .75; filter: blur(1px); }
.labels { font: 14px "Open Sans", sans-serif; fill: #111; }

/* File dialog */
.dialog { position: absolute; left: 221px; top: 169px; width: 611px; border: 1px solid #5f6163; background: #fff; box-shadow: 0 4px 16px rgba(0, 0, 0, .4); color: #000; font-size: 12px; line-height: 20px; }
.dlg-title { display: flex; align-items: center; gap: 5px; height: 29px; padding: 0 10px 0 8px; }
.dlg-title button { margin-left: auto; }
.dlg-nav { display: flex; align-items: center; height: 44px; padding: 0 12px 0 13px; color: #666; }
.dlg-nav .fwd { margin: 0 13px 0 18px; }
.dlg-nav .up { margin: 0 7px 0 11px; }
.address { display: flex; flex: none; align-items: center; width: 277px; height: 31px; padding-left: 3px; border: 1px solid #d9d9d9; gap: 8px; }
.address span { color: #000; white-space: nowrap; }
.address svg { margin-right: -1px; }
.drop { margin-left: auto; }
.refresh { width: 34px; height: 29px; margin-left: 4px; border-left: 1px solid #d9d9d9; }
.find { display: flex; align-items: center; flex: 1; gap: 13px; height: 31px; margin-left: 12px; padding-left: 13px; border: 1px solid #d9d9d9; min-width: 0; }
.find input { flex: 1; min-width: 0; outline: 0; }
.find input::placeholder { color: #666; opacity: 1; }
.dlg-tools { display: flex; align-items: center; gap: 30px; height: 32px; padding: 0 15px 0 18px; border-bottom: 1px solid #e6e8eb; background: #f4f6f8; color: #1e3656; }
.dlg-tools button { gap: 6px; }
.dlg-right { display: flex; align-items: center; gap: 21px; margin-left: auto; }
.dlg-right button:first-child { gap: 9px; }
.dlg-right .help { width: 16px; height: 16px; border-radius: 8px; background: #0b66c3; color: #fff; font-weight: 700; margin-left: -1px; }
.dlg-body { display: grid; grid-template-columns: 139px 17px minmax(0, 1fr); height: 291px; }
.places { padding-top: 8px; }
.places li { display: flex; align-items: center; gap: 5px; height: 24px; padding-left: 32px; white-space: nowrap; }
.places .root { padding-left: 24px; }
.places .net { margin-top: 8px; }
.places .on { background: #d9d9d9; }
.vscroll { display: flex; flex-direction: column; align-items: center; background: #f0f0f0; color: #555; }
.vscroll svg { margin: 4px 0; }
.vscroll i { width: 15px; background: #cdcdcd; }
.tree-scroll { margin-left: 1px; }
.tree-scroll i { margin-top: auto; height: 127px; }
.files { display: flex; flex-direction: column; margin-left: 3px; }
.files-main { display: flex; flex: 1; min-height: 0; }
.files-view { flex: 1; min-width: 0; margin-left: 16px; overflow: hidden; }
.list-scroll { width: 16px; }
.list-scroll i { height: 44px; margin-top: auto; }
.hscroll { display: flex; align-items: center; height: 17px; margin: 0 16px 0 0; background: #f0f0f0; color: #444; }
.hscroll svg { margin: 0 4px; }
.hscroll i { width: 275px; height: 15px; margin-right: auto; background: #cdcdcd; }
.files table { width: 100%; table-layout: fixed; border-collapse: collapse; }
.c-name { width: 256px; }
.c-date { width: 144px; }
th, td { padding: 0; text-align: left; font-weight: 400; white-space: nowrap; overflow: hidden; }
th { height: 22px; overflow: visible; color: #4c607a; }
th div { position: relative; z-index: 1; height: 26px; margin-bottom: -4px; padding: 3px 0 0 6px; background: #fff; border-left: 1px solid #e5e5e5; overflow: hidden; }
th:first-child div { padding-left: 2px; border: 0; }
.sorted { position: absolute; left: 121px; top: -2px; }
td { height: 21px; line-height: 17px; padding: 0 0 2px 7px; color: #6d6d6d; }
td:first-child { padding-left: 3px; color: #000; }
td svg { display: inline-block; vertical-align: middle; margin: -2px 4px 0 0; }
.files .on { background: #cce8ff; box-shadow: inset 0 0 0 1px #99d1ff; }
.dlg-foot { position: relative; height: 80px; padding: 11px 17px 0; background: #f0f0f0; }
.foot-row { display: flex; justify-content: flex-end; align-items: center; margin-bottom: 6px; }
.combo { position: relative; width: 200px; height: 26px; margin-left: 5px; border: 1px solid #7a7a7a; background: #fff; }
.combo input, .combo select { width: 100%; height: 24px; padding: 0 3px; appearance: none; outline: 0; }
.combo svg { position: absolute; right: 3px; top: 8px; color: #555; }
.combo.grey { width: 188px; margin-left: 12px; border-color: #adadad; background: #e1e1e1; }
.btn { width: 86px; height: 24px; margin: 0 1px 0 14px; border: 1px solid #adadad; background: #e1e1e1; line-height: 20px; }
.btn.primary { margin-right: 0; border: 2px solid #0078d7; }
.grip { position: absolute; right: 2px; bottom: 2px; }

/* Overlays */
.pointer-arrow { position: absolute; left: 269px; top: 536px; filter: drop-shadow(2px 3px 2px rgba(0, 0, 0, .45)); }
.cursor { position: absolute; left: 510px; top: 533px; }
.ime { position: absolute; left: 790px; bottom: 7px; display: flex; align-items: center; gap: 8px; width: 214px; height: 26px; padding-left: 25px; border: 1px solid #b9cdea; border-radius: 2px; background: #fff; color: #0a70d8; }
.ime b { width: 16px; font-size: 15px; line-height: 20px; }
.sogou { position: absolute; left: -13px; top: -6px; font-family: "Liberation Sans", sans-serif; }
.watermark { position: absolute; right: 10px; bottom: 7px; display: flex; align-items: center; }
.watermark div { display: flex; flex-direction: column; }
.watermark strong { font-size: 21px; line-height: 24px; font-weight: 500; color: #68a3dc; }
.watermark span { font: 17px/18px "Liberation Sans", sans-serif; color: #66c687; -webkit-text-stroke: 1px #66c687; }
```
